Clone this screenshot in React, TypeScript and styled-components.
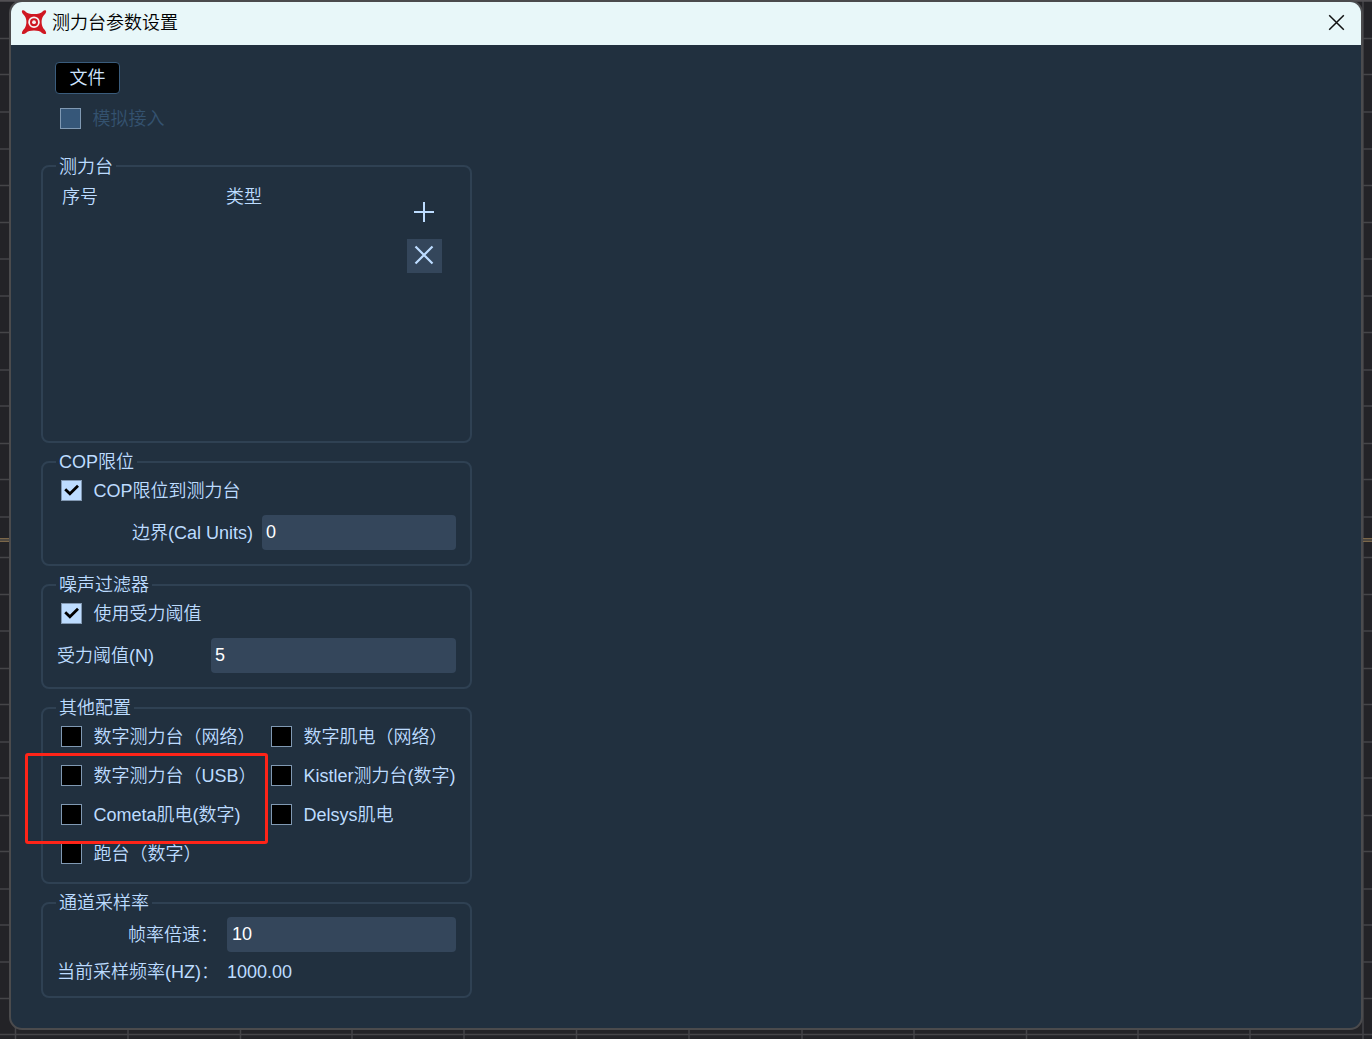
import React, { useState } from "react";
import styled, { createGlobalStyle } from "styled-components";

const GlobalStyle = createGlobalStyle`
  * { box-sizing: border-box; }
  body {
    margin: 0;
    background: #232327;
    overflow: hidden;
    font-family: "Liberation Sans", "Noto Sans CJK SC", sans-serif;
    font-size: 18px;
    font-weight: 350;
    color: #bddcff;
  }
`;

const Screen = styled.div`
  position: relative;
  width: 1372px;
  height: 1039px;
  padding: 0 9px;
  overflow: hidden;
`;

const Backdrop = styled.svg`
  position: absolute;
  inset: 0;
`;

const Dialog = styled.section`
  position: relative;
  height: 1030px;
  display: flex;
  flex-direction: column;
  background: #21303f;
  border: 2px solid #4b4b4d;
  border-radius: 13px;
  overflow: hidden;
`;

const TitleBar = styled.header`
  flex: none;
  height: 43px;
  padding: 0 16px 2px 10px;
  display: flex;
  align-items: center;
  gap: 5px;
  background: #e8f7f9;
  color: #000;
`;

const Title = styled.h1`
  flex: 1;
  margin: 0;
  padding-top: 1px;
  font-size: 18px;
  font-weight: 350;
  line-height: 24px;
`;

const IconButton = styled.button<{ $filled?: boolean; $w?: number; $h?: number }>`
  width: ${(p) => p.$w ?? 35}px;
  height: ${(p) => p.$h ?? 34}px;
  padding: 0;
  border: 0;
  display: flex;
  align-items: center;
  justify-content: center;
  background: ${(p) => (p.$filled ? "#34465b" : "transparent")};
`;

const Content = styled.main`
  width: 461px;
  padding: 17px 0 0 30px;
  display: flex;
  flex-direction: column;
`;

const FileButton = styled.button`
  width: 65px;
  height: 32px;
  margin-left: 14px;
  padding: 0;
  border: 1px solid #3a5c7c;
  border-radius: 4px;
  background: #000;
  color: #cfe5ff;
  font: inherit;
  line-height: 28px;
`;

const SimulatedRow = styled.div`
  margin: 13px 0 26px 19px;
`;

const Groups = styled.div`
  display: flex;
  flex-direction: column;
  gap: 9px;
`;

const Group = styled.fieldset<{ $height: number }>`
  position: relative;
  min-width: 0;
  height: ${(p) => p.$height}px;
  margin: 0;
  padding: 0 14px;
  border: 2px solid #2f4153;
  border-radius: 8px;
`;

const Legend = styled.legend<{ $line?: number }>`
  height: 20px;
  padding: 0 3px;
  margin-left: -1px;
  line-height: ${(p) => p.$line ?? 21}px;
  white-space: nowrap;
`;

const CheckLabel = styled.label<{ $disabled?: boolean }>`
  display: flex;
  align-items: center;
  gap: 11.5px;
  height: 23px;
  line-height: 23px;
  white-space: nowrap;
  color: ${(p) => (p.$disabled ? "#34526f" : "inherit")};
`;

const HiddenInput = styled.input`
  appearance: none;
  width: 0;
  height: 0;
  margin: 0 -11.5px 0 0;
`;

const CheckText = styled.span`
  padding-top: 2px;
`;

const Box = styled.span<{ $checked?: boolean; $disabled?: boolean }>`
  flex: none;
  width: 21px;
  height: 21px;
  display: flex;
  align-items: center;
  justify-content: center;
  border: 1px solid ${(p) => (p.$checked ? "#8298b2" : "#8099b3")};
  background: ${(p) => (p.$disabled ? "#365779" : p.$checked ? "#bddcff" : "#000")};
`;

const PlateTable = styled.div`
  display: flex;
  justify-content: space-between;
`;

const TableHead = styled.div`
  display: grid;
  grid-template-columns: 164px 100px;
  padding: 10px 0 0 5px;
  line-height: 22px;
`;

const Tools = styled.div`
  display: flex;
  flex-direction: column;
  gap: 10px;
  padding: 19px 14px 0 0;
`;

const CheckWrap = styled.div`
  padding: 7px 0 0 4px;
`;

const Field = styled.div<{ $top: number; $label: number; $gap: number }>`
  display: grid;
  grid-template-columns: ${(p) => p.$label}px 1fr;
  column-gap: ${(p) => p.$gap}px;
  align-items: center;
  height: 35px;
  margin-top: ${(p) => p.$top}px;
  line-height: 22px;
  white-space: nowrap;
`;

const FieldLabel = styled.span<{ $right?: boolean }>`
  text-align: ${(p) => (p.$right ? "right" : "left")};
`;

const Colon = styled.span`
  font-weight: 300;
`;

const TextInput = styled.input<{ $inset?: number }>`
  width: 100%;
  height: 35px;
  padding: 0 ${(p) => p.$inset ?? 4}px;
  border: 0;
  border-radius: 4px;
  outline: none;
  background: #34465b;
  color: #fff;
  font: inherit;
`;

const OptionGrid = styled.div`
  display: grid;
  grid-template-columns: 210px 1fr;
  grid-auto-rows: 23px;
  row-gap: 16px;
  padding: 7px 0 0 4px;
`;

const Highlight = styled.div`
  position: absolute;
  left: -18px;
  top: 35px;
  width: 243px;
  height: 91px;
  border: 3px solid #ff2418;
  border-radius: 3px;
  pointer-events: none;
`;

const rows = [38.5, 74.5, 112, 149, 185.5, 222.5, 259, 296, 332.5, 370, 406, 443.5, 479.5, 517, 557.5, 594.5, 631, 668.5, 704.5, 742, 778, 815.5, 851.5, 889, 925, 962, 998.5, 1034.5];
const cols = [15.5, 128, 240.5, 352, 464, 576.5, 689, 802, 914, 1026.5, 1138, 1250, 1363];

function Grid() {
  return (
    <Backdrop width="1372" height="1039">
      <g stroke="#454548" strokeWidth="1.5">
        {rows.map((y) => <path key={y} d={`M0 ${y}H1372`} />)}
        {cols.map((x) => <path key={x} d={`M${x} 0V1039`} />)}
      </g>
      <path d="M0 540H1372" stroke="#4e4840" strokeWidth="2" />
      <path d="M0 538.5H1372M0 541.5H1372" stroke="#7b6749" />
      <path d="M0 .8H1372" stroke="#525054" strokeWidth="2" />
    </Backdrop>
  );
}

function Logo() {
  return (
    <svg width="26" height="26" viewBox="0 0 26 26">
      <path d="M1 .6Q2.5 -.2 4.4 1.4Q7 4 13 4Q19 4 21.6 1.4Q23.5 -.2 25 .6Q25.6 2.5 23.6 4.4Q20.6 7 20.6 12Q20.6 17 23.6 19.8Q25.6 22 25 23.8Q23 24.7 21 23Q18.5 20.6 13 20.6Q7.5 20.6 5 23Q3 24.7 1 23.8Q.4 22 2.4 19.8Q5.4 17 5.4 12Q5.4 7 2.4 4.4Q.4 2.5 1 .6Z" fill="#cf1722" />
      <circle cx="13" cy="12.2" r="4.9" fill="none" stroke="#f5f5f6" strokeWidth="1.8" />
      <circle cx="13" cy="12.2" r="1.9" fill="#f5f5f6" />
    </svg>
  );
}

interface CheckProps {
  label: string;
  initial?: boolean;
  disabled?: boolean;
}

function Check({ label, initial = false, disabled }: CheckProps) {
  const [on, setOn] = useState(initial);
  return (
    <CheckLabel $disabled={disabled}>
      <HiddenInput type="checkbox" checked={on} disabled={disabled} onChange={() => setOn(!on)} />
      <Box $checked={on} $disabled={disabled}>
        {on && (
          <svg width="19" height="19" viewBox="0 0 19 19">
            <path d="M3.2 8.2L7.9 12.7L16 4.8" fill="none" stroke="#000" strokeWidth="2.8" />
          </svg>
        )}
      </Box>
      <CheckText>{label}</CheckText>
    </CheckLabel>
  );
}

export default function App() {
  return (
    <Screen lang="zh-CN">
      <GlobalStyle />
      <Grid />
      <Dialog>
        <TitleBar>
          <Logo />
          <Title>测力台参数设置</Title>
          <IconButton $w={17} $h={17} aria-label="关闭">
            <svg width="17" height="17" viewBox="0 0 17 17">
              <path d="M1.2 1.2L15.8 15.8M15.8 1.2L1.2 15.8" stroke="#111" strokeWidth="1.5" />
            </svg>
          </IconButton>
        </TitleBar>
        <Content>
          <FileButton>文件</FileButton>
          <SimulatedRow>
            <Check label="模拟接入" disabled />
          </SimulatedRow>
          <Groups>
            <Group $height={287}>
              <Legend $line={23}>测力台</Legend>
              <PlateTable>
                <TableHead>
                  <span>序号</span>
                  <span>类型</span>
                </TableHead>
                <Tools>
                  <IconButton aria-label="添加">
                    <svg width="23" height="22" viewBox="0 0 23 22">
                      <path d="M11 1V21M1 11H21" stroke="#bddcff" strokeWidth="2" />
                    </svg>
                  </IconButton>
                  <IconButton $filled aria-label="删除">
                    <svg width="21" height="22" viewBox="0 0 21 22">
                      <path d="M1.5 1.5L18.5 18.5M18.5 1.5L1.5 18.5" stroke="#bddcff" strokeWidth="2.2" />
                    </svg>
                  </IconButton>
                </Tools>
              </PlateTable>
            </Group>
            <Group $height={114}>
              <Legend>COP限位</Legend>
              <CheckWrap><Check label="COP限位到测力台" initial /></CheckWrap>
              <Field $top={13} $label={196} $gap={9}>
                <FieldLabel $right>边界(Cal Units)</FieldLabel>
                <TextInput defaultValue="0" />
              </Field>
            </Group>
            <Group $height={114}>
              <Legend>噪声过滤器</Legend>
              <CheckWrap><Check label="使用受力阈值" initial /></CheckWrap>
              <Field $top={13} $label={145} $gap={9}>
                <FieldLabel>受力阈值(N)</FieldLabel>
                <TextInput defaultValue="5" />
              </Field>
            </Group>
            <Group $height={186}>
              <Legend>其他配置</Legend>
              <OptionGrid>
                <Check label="数字测力台（网络）" />
                <Check label="数字肌电（网络）" />
                <Check label="数字测力台（USB）" />
                <Check label="Kistler测力台(数字)" />
                <Check label="Cometa肌电(数字)" />
                <Check label="Delsys肌电" />
                <Check label="跑台（数字）" />
              </OptionGrid>
              <Highlight />
            </Group>
            <Group $height={105}>
              <Legend>通道采样率</Legend>
              <Field $top={4} $label={161} $gap={9}>
                <FieldLabel $right>帧率倍速<Colon>：</Colon></FieldLabel>
                <TextInput $inset={5} defaultValue="10" />
              </Field>
              <Field $top={2} $label={161} $gap={9}>
                <FieldLabel $right>当前采样频率(HZ)<Colon>：</Colon></FieldLabel>
                <span>1000.00</span>
              </Field>
            </Group>
          </Groups>
        </Content>
      </Dialog>
    </Screen>
  );
}
